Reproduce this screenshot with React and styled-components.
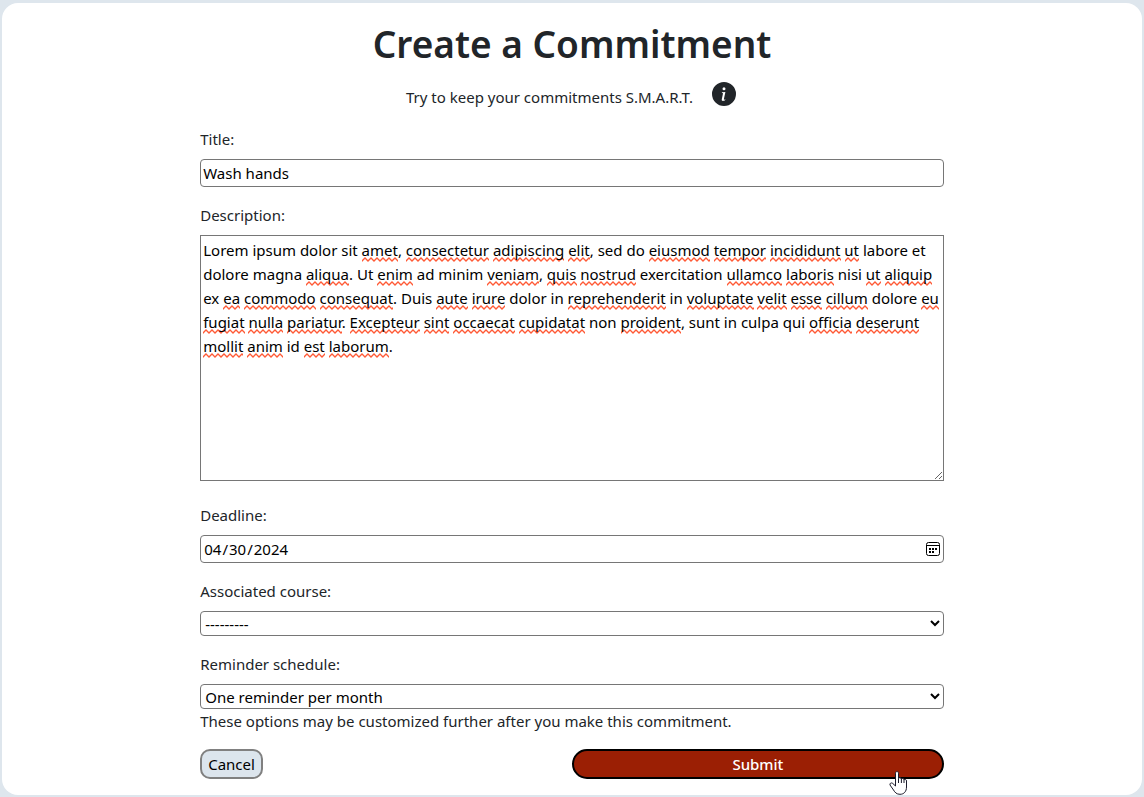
import React, { useState } from "react";
import styled, { createGlobalStyle } from "styled-components";
import { BsInfoCircleFill } from "react-icons/bs";

const GlobalStyle = createGlobalStyle`
  *, *::before, *::after { box-sizing: border-box; }
  body {
    margin: 0;
    padding: 3px 2px 2px;
    background: #dee6ed;
    color: #212529;
    font-family: "Segoe UI", "Noto Sans", "Open Sans", sans-serif;
    font-size: 15px;
    line-height: 24px;
  }
  input, select, textarea, button {
    margin: 0;
    color: #000;
    font: inherit;
  }
`;

const Card = styled.main`
  padding: 17px 0 16px;
  border-radius: 16px;
  background: #fff;
`;

const Heading = styled.h1`
  margin: 0 0 8px;
  font-size: 37px;
  font-weight: 600;
  line-height: 48px;
  text-align: center;
`;

const Hint = styled.div`
  display: flex;
  justify-content: center;
  gap: 19px;
  margin-bottom: 18px;
  padding: 9px 2px 0 0;
`;

const InfoButton = styled.button`
  width: 24px;
  height: 24px;
  margin-top: -3px;
  padding: 0;
  border: 0;
  border-radius: 50%;
  background: none;
  color: #212529;

  svg { display: block; }
`;

const Form = styled.form`
  display: flex;
  flex-direction: column;
  gap: 16px;
  width: 65vw;
  margin: 0 auto;
`;

const Field = styled.div`
  display: flex;
  flex-direction: column;
  padding-bottom: ${(p) => (p.$roomy ? "6px" : "0")};

  label { margin-bottom: 8px; }
`;

const TextInput = styled.input`
  width: 100%;
  height: 28px;
  padding: 1px 2px;
  border: 1px solid #767676;
  border-radius: 4px;
  background: #fff;

  &::-webkit-calendar-picker-indicator { opacity: 0; }
`;

const Select = styled.select`
  width: 100%;
  height: 25px;
  padding: 0;
  border: 1px solid #767676;
  border-radius: 4px;
  background: #fff;
`;

const Overlaid = styled.div`
  position: relative;
`;

const CalendarIcon = styled.svg`
  position: absolute;
  top: 7px;
  right: 4px;
  pointer-events: none;
`;

const TextArea = styled.textarea`
  position: relative;
  display: block;
  width: 100%;
  height: 246px;
  padding: 2px 0 2px 2px;
  border: 1px solid #767676;
  border-radius: 0;
  background: transparent;
  resize: vertical;
`;

const SpellingLayer = styled.div`
  position: absolute;
  inset: 0;
  padding: 3px 1px 3px 3px;
  overflow: hidden;
  color: transparent;
  white-space: pre-wrap;
  overflow-wrap: break-word;
  user-select: none;
`;

const Misspelt = styled.span`
  padding-bottom: 2px;
  background: url("data:image/svg+xml,%3Csvg xmlns='http://www.w3.org/2000/svg' width='6' height='5'%3E%3Cpath d='M-3 1L0 4L3 1L6 4L9 1' fill='none' stroke='%23ff5a36' stroke-width='1.3'/%3E%3C/svg%3E")
    left bottom repeat-x;
`;

const Actions = styled.div`
  position: relative;
  display: flex;
  justify-content: space-between;
`;

const Button = styled.button`
  height: 30px;
  padding: 0 6px;
  border: 2px solid #808080;
  border-radius: 10px;
  background: #dce5ed;
`;

const SubmitButton = styled(Button)`
  width: 50%;
  border-color: #000;
  border-radius: 15px;
  background: #9b1f04;
  color: #fff;
  font-weight: 500;
`;

const Pointer = styled.svg`
  position: absolute;
  top: 22px;
  right: 36px;
  pointer-events: none;
`;

const LOREM =
  "Lorem ipsum dolor sit amet, consectetur adipiscing elit, sed do eiusmod tempor incididunt ut labore et dolore magna aliqua. Ut enim ad minim veniam, quis nostrud exercitation ullamco laboris nisi ut aliquip ex ea commodo consequat. Duis aute irure dolor in reprehenderit in voluptate velit esse cillum dolore eu fugiat nulla pariatur. Excepteur sint occaecat cupidatat non proident, sunt in culpa qui officia deserunt mollit anim id est laborum.";

const UNKNOWN_WORDS = new Set(
  "amet consectetur adipiscing elit eiusmod tempor incididunt ut aliqua enim veniam quis nostrud ullamco laboris aliquip ea commodo consequat aute irure reprehenderit voluptate velit esse cillum eu fugiat nulla pariatur Excepteur sint occaecat cupidatat proident officia deserunt mollit anim est laborum".split(" ")
);

function SpellCheckedTextArea({ id }) {
  const [text, setText] = useState(LOREM);
  return (
    <Overlaid>
      <SpellingLayer aria-hidden="true">
        {text.split(/(\w+)/).map((part, i) =>
          UNKNOWN_WORDS.has(part) ? <Misspelt key={i}>{part}</Misspelt> : part
        )}
      </SpellingLayer>
      <TextArea
        id={id}
        value={text}
        spellCheck={false}
        onChange={(e) => setText(e.target.value)}
      />
    </Overlaid>
  );
}

export default function App() {
  return (
    <>
      <GlobalStyle />
      <Card>
        <Heading>Create a Commitment</Heading>
        <Hint>
          <span>Try to keep your commitments S.M.A.R.T.</span>
          <InfoButton type="button" aria-label="About S.M.A.R.T. commitments">
            <BsInfoCircleFill size={24} />
          </InfoButton>
        </Hint>
        <Form onSubmit={(e) => e.preventDefault()}>
          <Field>
            <label htmlFor="title">Title:</label>
            <TextInput id="title" type="text" defaultValue="Wash hands" />
          </Field>
          <Field $roomy>
            <label htmlFor="description">Description:</label>
            <SpellCheckedTextArea id="description" />
          </Field>
          <Field>
            <label htmlFor="deadline">Deadline:</label>
            <Overlaid>
              <TextInput id="deadline" type="date" defaultValue="2024-04-30" />
              <CalendarIcon width="14" height="14" viewBox="0 0 14 14" fill="none" aria-hidden="true">
                <rect x="0.5" y="0.5" width="13" height="13" rx="2" stroke="#000" />
                <path d="M1 3.5h12" stroke="#000" />
                <path
                  d="M3 6h2v2H3zM6 6h2v2H6zM9 6h2v2H9zM3 9h2v2H3zM6 9h2v2H6z"
                  fill="#000"
                />
              </CalendarIcon>
            </Overlaid>
          </Field>
          <Field>
            <label htmlFor="course">Associated course:</label>
            <Select id="course">
              <option>---------</option>
            </Select>
          </Field>
          <Field>
            <label htmlFor="schedule">Reminder schedule:</label>
            <Select id="schedule" aria-describedby="schedule-help">
              <option>One reminder per month</option>
            </Select>
            <span id="schedule-help">
              These options may be customized further after you make this commitment.
            </span>
          </Field>
          <Actions>
            <Button type="button">Cancel</Button>
            <SubmitButton type="submit">Submit</SubmitButton>
            <Pointer width="19" height="24" viewBox="0 0 19 24" aria-hidden="true">
              <path
                d="M6.5 14V2.2C6.5 0 9.500 0 9.500 2.200V7.500C10 6.300 12 6.500 12.300 8C13 7 14.800 7.300 15 8.800C16 8 17.500 8.500 17.500 10V16C17.500 20.500 15 23.300 11 23.300C7.500 23.300 6 21.500 4.500 19L1 14C0.500 12.300 2.300 11.300 3.700 12.400L6.500 15Z"
                fill="#fff"
                stroke="#1b1b2b"
              />
              <path d="M9.500 7.500V12M12.400 8V12M15 8.800V12" fill="none" stroke="#1b1b2b" />
            </Pointer>
          </Actions>
        </Form>
      </Card>
    </>
  );
}
